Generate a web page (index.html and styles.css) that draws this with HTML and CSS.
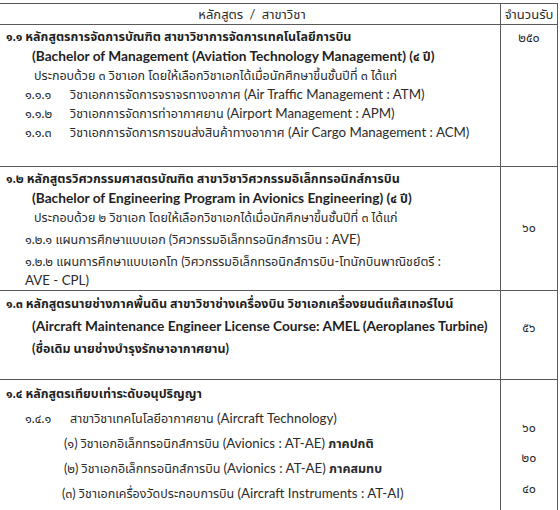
FILE: index.html
```html
<!DOCTYPE html>
<html lang="th">
<head>
<meta charset="utf-8">
<link rel="stylesheet" href="styles.css">
</head>
<body>
<div class="sheet">
  <div class="row head">
    <div class="c1">หลักสูตร / สาขาวิชา</div>
    <div class="c2">จำนวนรับ</div>
  </div>

  <div class="row r1">
    <div class="c1">
      <div class="ln b">๑.๑ หลักสูตรการจัดการบัณฑิต สาขาวิชาการจัดการเทคโนโลยีการบิน</div>
      <div class="ln b i2"><span class="en">(Bachelor of Management (Aviation Technology Management) (</span>๔ ปี<span class="en">)</span></div>
      <div class="ln i2b">ประกอบด้วย ๓ วิชาเอก โดยให้เลือกวิชาเอกได้เมื่อนักศึกษาขึ้นชั้นปีที่ ๓ ได้แก่</div>
      <div class="ln i1"><span class="num">๑.๑.๑</span>วิชาเอกการจัดการจราจรทางอากาศ <span class="en">(Air Traffic Management : ATM)</span></div>
      <div class="ln i1"><span class="num">๑.๑.๒</span>วิชาเอกการจัดการท่าอากาศยาน <span class="en">(Airport Management : APM)</span></div>
      <div class="ln i1"><span class="num">๑.๑.๓</span>วิชาเอกการจัดการการขนส่งสินค้าทางอากาศ <span class="en">(Air Cargo Management : ACM)</span></div>
    </div>
    <div class="c2 top">๒๕๐</div>
  </div>

  <div class="row r2">
    <div class="c1">
      <div class="ln b">๑.๒ หลักสูตรวิศวกรรมศาสตรบัณฑิต สาขาวิชาวิศวกรรมอิเล็กทรอนิกส์การบิน</div>
      <div class="ln b i2"><span class="en">(Bachelor of Engineering Program in Avionics Engineering) (</span>๔ ปี<span class="en">)</span></div>
      <div class="ln i2b">ประกอบด้วย ๒ วิชาเอก โดยให้เลือกวิชาเอกได้เมื่อนักศึกษาขึ้นชั้นปีที่ ๓ ได้แก่</div>
      <div class="ln i1 gap">๑.๒.๑ แผนการศึกษาแบบเอก (วิศวกรรมอิเล็กทรอนิกส์การบิน : <span class="en">AVE)</span></div>
      <div class="ln i1 gap">๑.๒.๒ แผนการศึกษาแบบเอกโท (วิศวกรรมอิเล็กทรอนิกส์การบิน-โทนักบินพาณิชย์ตรี :</div>
      <div class="ln i1"><span class="en">AVE - CPL)</span></div>
    </div>
    <div class="c2 mid">๖๐</div>
  </div>

  <div class="row r3">
    <div class="c1">
      <div class="ln b">๑.๓ หลักสูตรนายช่างภาคพื้นดิน สาขาวิชาช่างเครื่องบิน วิชาเอกเครื่องยนต์แก๊สเทอร์ไบน์</div>
      <div class="ln b i2"><span class="en">(Aircraft Maintenance Engineer License Course: AMEL (Aeroplanes Turbine)</span></div>
      <div class="ln b i2">(ชื่อเดิม นายช่างบำรุงรักษาอากาศยาน)</div>
    </div>
    <div class="c2 mid up">๕๖</div>
  </div>

  <div class="row r4">
    <div class="c1">
      <div class="ln b">๑.๔ หลักสูตรเทียบเท่าระดับอนุปริญญา</div>
      <div class="ln i1"><span class="num">๑.๔.๑</span>สาขาวิชาเทคโนโลยีอากาศยาน <span class="en">(Aircraft Technology)</span></div>
      <div class="ln i3">(๑) วิชาเอกอิเล็กทรอนิกส์การบิน <span class="en">(Avionics : AT-AE)</span> <b>ภาคปกติ</b></div>
      <div class="ln i3">(๒) วิชาเอกอิเล็กทรอนิกส์การบิน <span class="en">(Avionics : AT-AE)</span> <b>ภาคสมทบ</b></div>
      <div class="ln i3b">(๓) วิชาเอกเครื่องวัดประกอบการบิน <span class="en">(Aircraft Instruments : AT-AI)</span></div>
    </div>
    <div class="c2 nums">
      <div class="n">๖๐</div>
      <div class="n n2">๒๐</div>
      <div class="n n3">๔๐</div>
    </div>
  </div>
</div>
</body>
</html>
```
FILE: styles.css
```css
html, body {
  margin: 0;
  padding: 0;
  background: #ffffff;
}
body {
  font-family: "Lato", "Noto Sans Thai", "Noto Sans", sans-serif;
  font-size: 12.5px;
  color: #2b2b2b;
}
.en {
  font-size: 13.3px;
}
.b {
  font-weight: bold;
  color: #1f1f1f;
}
.b .en {
  font-size: 13.7px;
}
.sheet {
  width: 557px;
  margin-top: 3px;
  border-top: 1.5px solid #5a5a5a;
  border-right: 1.5px solid #5a5a5a;
}
.row {
  display: flex;
  border-bottom: 1.5px solid #5a5a5a;
}
.c1 {
  width: 501px;
  border-right: 1.5px solid #5a5a5a;
  box-sizing: border-box;
}
.c2 {
  flex: 1;
  text-align: center;
}
.head {
  height: 20px;
  line-height: 20px;
  font-size: 13px;
}
.head .c1 {
  text-align: center;
  word-spacing: 3px;
  padding-left: 4px;
}
.ln {
  line-height: 19px;
  white-space: nowrap;
  padding-left: 6px;
}
.num {
  display: inline-block;
  width: 45px;
}
.i1 { padding-left: 25px; }
.i2 { padding-left: 32px; }
.i2b { padding-left: 34px; }
.i3 { padding-left: 64px; }
.i3b { padding-left: 62px; }
.r1 .c1 { padding: 2px 0 24px; }
.r1 .c2.top { padding-top: 3px; line-height: 19px; }
.r2 .c1 { padding: 2px 0 0; }
.r2 .gap { margin-top: 3px; }
.mid { display: flex; align-items: center; justify-content: center; }
.up { padding-bottom: 14px; }
.r3 .c1 { padding: 2px 0 19px; }
.r3 .ln { line-height: 22px; }
.r4 .c1 { padding: 2px 0 7px; }
.r4 .ln { line-height: 24px; }
.nums { padding-top: 36px; }
.n { line-height: 24px; }
.n2 { margin-top: 6px; }
.n3 { margin-top: 7px; }
```
